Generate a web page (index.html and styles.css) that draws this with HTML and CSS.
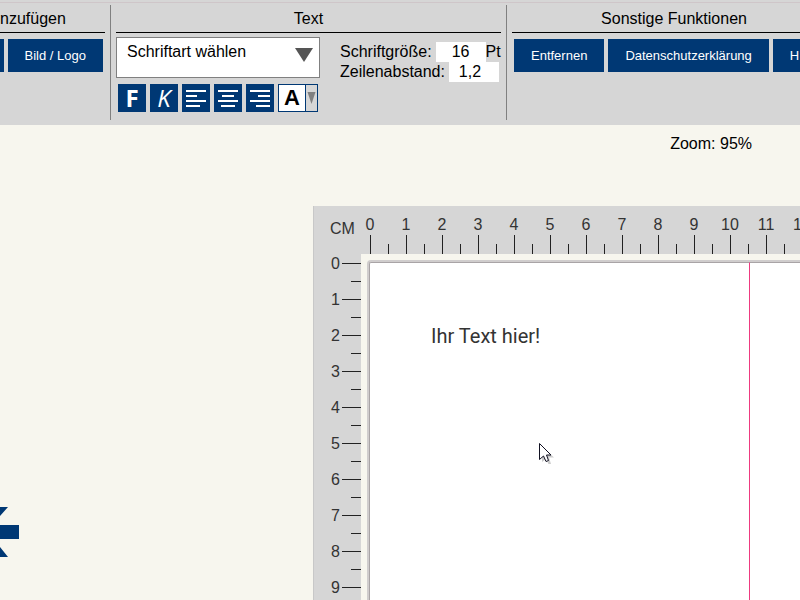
FILE: index.html
```html
<!DOCTYPE html>
<html lang="de">
<head>
<meta charset="utf-8">
<title>Editor</title>
<link rel="stylesheet" href="styles.css">
</head>
<body>
<header class="toolbar">
  <section class="group group-add">
    <h2 class="group-title">nzufügen</h2>
    <div class="actions">
      <button class="action stub" type="button" aria-label="Text"></button>
      <button class="action" type="button">Bild / Logo</button>
    </div>
  </section>
  <section class="group group-text">
    <h2 class="group-title">Text</h2>
    <div class="text-tools">
      <div class="font-tools">
        <div class="font-picker">
          <select class="font-select" aria-label="Schriftart">
            <option>Schriftart wählen</option>
          </select>
          <svg class="font-arrow" viewBox="0 0 18 14" aria-hidden="true"><path d="M0 0H18L9 14Z"/></svg>
        </div>
        <div class="format">
          <button class="tool bold" type="button">F</button>
          <button class="tool italic" type="button">K</button>
          <button class="tool" type="button" aria-label="Linksbündig">
            <svg class="tool-icon" viewBox="0 0 28 28"><path d="M4 7H24M4 12H15M4 17H24M4 22H18"/></svg>
          </button>
          <button class="tool" type="button" aria-label="Zentriert">
            <svg class="tool-icon" viewBox="0 0 28 28"><path d="M4 7H24M8 12H20M4 17H24M7 22H21"/></svg>
          </button>
          <button class="tool" type="button" aria-label="Rechtsbündig">
            <svg class="tool-icon" viewBox="0 0 28 28"><path d="M4 7H24M12 12H24M4 17H24M10 22H24"/></svg>
          </button>
          <button class="color" type="button">
            <span class="color-letter">A</span>
            <span class="color-more"><svg class="color-arrow" viewBox="0 0 8 12"><path d="M0 0H8L4 12Z"/></svg></span>
          </button>
        </div>
      </div>
      <div class="measures">
        <div class="measure">
          <label for="size">Schriftgröße:</label>
          <input class="value" id="size" type="text" value="16">
          <span class="unit">Pt</span>
        </div>
        <div class="measure">
          <label for="leading">Zeilenabstand:</label>
          <input class="value spaced" id="leading" type="text" value="1,2">
        </div>
      </div>
    </div>
  </section>
  <section class="group group-more">
    <h2 class="group-title">Sonstige Funktionen</h2>
    <div class="actions">
      <button class="action" type="button">Entfernen</button>
      <button class="action" type="button">Datenschutzerklärung</button>
      <button class="action open" type="button">H</button>
    </div>
  </section>
</header>
<main class="workspace">
  <p class="zoom">Zoom: 95%</p>
  <button class="back" type="button" aria-label="Zurück">
    <svg class="back-icon" viewBox="0 0 19 50"><path d="M0 0H8L0 9ZM0 18H19V32H0ZM0 40L8 50H0Z"/></svg>
  </button>
  <div class="board">
    <div class="corner">CM</div>
    <ol class="ruler-x">
      <li>0</li><li>1</li><li>2</li><li>3</li><li>4</li><li>5</li><li>6</li><li>7</li><li>8</li><li>9</li><li>10</li><li>11</li><li>12</li>
    </ol>
    <ol class="ruler-y">
      <li>0</li><li>1</li><li>2</li><li>3</li><li>4</li><li>5</li><li>6</li><li>7</li><li>8</li><li>9</li>
    </ol>
    <div class="stage">
      <div class="sheet">
        <div class="page"><p class="sample">Ihr Text hier!</p></div>
        <div class="page"></div>
      </div>
      <svg class="pointer" viewBox="0 0 16 22" aria-hidden="true">
        <path class="pointer-shadow" d="M3 3V19L7 16L9.500 21H12L10 14.500H15Z"/>
        <path class="pointer-body" d="M.5 .5V16.500L4.500 13L7 18.500L9.500 17.500L7.500 12H12Z"/>
      </svg>
    </div>
  </div>
</main>
</body>
</html>
```
FILE: styles.css
```css
* {
  box-sizing: border-box;
}

body {
  display: flex;
  flex-direction: column;
  height: 100vh;
  margin: 0;
  overflow: hidden;
  background: #f7f6ee;
  color: #000;
  font: 16px/20px "Liberation Sans", Arial, sans-serif;
}

button,
input,
select {
  margin: 0;
  border: 0;
  border-radius: 0;
  padding: 0;
  font: inherit;
}

svg {
  display: block;
}

/* Toolbar */

.toolbar {
  display: flex;
  flex: none;
  padding: 3px 0 5px;
  border-top: 2px solid #d6d6d6;
  background: linear-gradient(#cfc6c9 1px, #d6d6d6 1px);
  overflow: hidden;
}

.group {
  flex: none;
  height: 115px;
  padding: 0 5px;
  border-right: 1px solid #808080;
}

.group-add {
  width: 111px;
  padding-left: 0;
}

.group-text {
  width: 396px;
}

.group-more {
  width: 335px;
}

.group-title {
  margin: 0;
  padding: 4px 0 3px;
  border-bottom: 1px solid #000;
  font-size: 16px;
  font-weight: 400;
  text-align: center;
}

.group-add .group-title {
  text-align: left;
}

.actions {
  display: flex;
  gap: 4px;
  padding: 6px 2px;
}

.group-add .actions {
  padding-left: 0;
}

.action {
  height: 33px;
  padding: 0 17px;
  background: #003874;
  color: #fff;
  font-size: 13px;
  white-space: nowrap;
}

.action.stub {
  width: 4px;
  padding: 0;
}

.action.open {
  flex: 1;
  text-align: left;
}

.text-tools {
  display: flex;
  gap: 20px;
  padding-top: 4px;
}

.font-tools {
  width: 204px;
}

.font-picker {
  position: relative;
}

.font-select {
  display: block;
  width: 100%;
  height: 41px;
  padding: 0 40px 12px 10px;
  border: 1px solid #808080;
  background: #fff;
  color: #000;
  appearance: none;
}

.font-arrow {
  position: absolute;
  top: 11px;
  right: 7px;
  width: 18px;
  height: 14px;
  fill: #555;
  pointer-events: none;
}

.format {
  display: flex;
  gap: 4px;
  padding: 6px 2px;
}

.tool {
  width: 28px;
  height: 28px;
  background: #003874;
  color: #fff;
  font: 24px/28px "Open Sans", sans-serif;
  text-align: center;
}

.bold {
  font-weight: 700;
}

.italic {
  font-style: italic;
}

.tool-icon {
  width: 28px;
  height: 28px;
  fill: none;
  stroke: #fff;
  stroke-width: 2;
}

.color {
  display: flex;
  width: 40px;
  height: 28px;
  border: 1px solid #003874;
  background: #fff;
  color: #000;
}

.color-letter {
  flex: 1;
  font-size: 22px;
  font-weight: 700;
  line-height: 26px;
}

.color-more {
  width: 12px;
  height: 26px;
  padding: 7px 1px;
  border-left: 1px solid #003874;
  background: #d6d6d6;
}

.color-arrow {
  width: 9px;
  height: 12px;
  fill: #808080;
}

.measures {
  padding-top: 5px;
}

.measure {
  display: flex;
  gap: 4px;
  height: 20px;
}

.value {
  width: 50px;
  height: 20px;
  background: #fff;
  text-align: center;
}

.value.spaced {
  padding-right: 8px;
}

.unit {
  margin-left: -4px;
}

/* Workspace */

.workspace {
  display: grid;
  flex: 1;
  grid-template: 81px 1fr / 313px 1fr;
  min-height: 0;
}

.zoom {
  grid-column: 1 / -1;
  margin: 0;
  padding: 9px 48px 0 0;
  text-align: right;
}

.back {
  align-self: start;
  width: 19px;
  margin-top: 301px;
  background: none;
}

.back-icon {
  width: 19px;
  height: 50px;
  fill: #003874;
}

/* Board with centimetre rulers, 36px per centimetre */

.board {
  display: grid;
  grid-template: 48px 1fr / 47px 1fr;
  min-width: 0;
  min-height: 0;
  border-left: 1px solid #c8c8c8;
  background: #d6d6d6;
  color: #333;
  overflow: hidden;
}

.corner {
  padding: 13px 0 0 16px;
}

.ruler-x,
.ruler-y {
  display: flex;
  margin: 0;
  padding: 0;
  list-style: none;
  min-width: 0;
  min-height: 0;
}

.ruler-x {
  margin-left: -8px;
}

.ruler-x li {
  flex: none;
  width: 36px;
  height: 48px;
  padding: 9px 2px 0 0;
  background:
    linear-gradient(#222, #222) 17px 100% / 1px 19px no-repeat,
    linear-gradient(#222, #222) 35px 100% / 1px 10px no-repeat;
  text-align: center;
}

.ruler-y {
  flex-direction: column;
  margin-top: -8px;
}

.ruler-y li {
  flex: none;
  height: 36px;
  padding: 8px 21px 0 0;
  background:
    linear-gradient(#222, #222) 100% 17px / 19px 1px no-repeat,
    linear-gradient(#222, #222) 100% 35px / 10px 1px no-repeat;
  text-align: right;
}

.stage {
  position: relative;
  min-width: 0;
  min-height: 0;
  padding: 6px 0 0 6px;
  background: #f7f6ee;
}

.sheet {
  display: grid;
  grid-template-columns: 380px 1fr;
  height: 100%;
  border: solid #d0cdcd;
  border-width: 2px 0 0 2px;
  border-radius: 4px 0 0;
  background: #fff;
}

.page {
  border: solid #a9a4a6;
  border-width: 1px 0 0;
}

.page:first-child {
  border-left-width: 1px;
  border-top-left-radius: 2px;
}

.page + .page {
  border-left: 1px solid #ee3a80;
}

.sample {
  margin: 0;
  padding: 61px 0 0 61px;
  color: #333;
  font: 20px/24px Roboto, sans-serif;
}

.pointer {
  position: absolute;
  top: 189px;
  left: 178px;
  width: 16px;
  height: 22px;
}

.pointer-shadow {
  fill: #000;
  opacity: .2;
}

.pointer-body {
  fill: #fff;
  stroke: #112;
}
```
